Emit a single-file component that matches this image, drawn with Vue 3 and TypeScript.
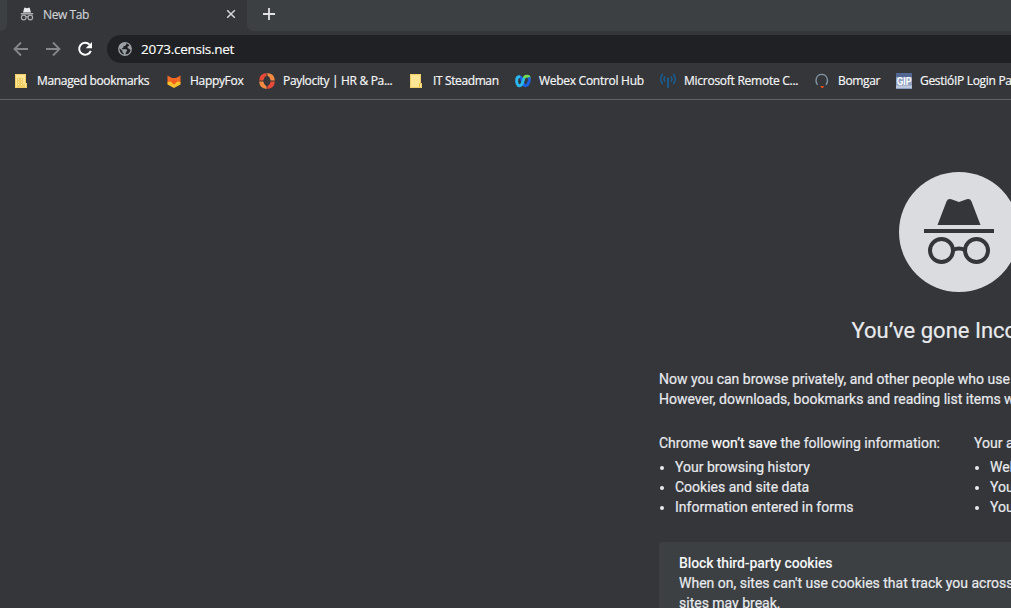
<script setup lang="ts">
interface Bookmark {
  icon: string
  label: string
  width: number
  spacing: number
}

const bookmarks: Bookmark[] = [
  { icon: 'managed', label: 'Managed bookmarks', width: 153, spacing: -0.34 },
  { icon: 'fox', label: 'HappyFox', width: 93, spacing: -0.32 },
  { icon: 'paylocity', label: 'Paylocity | HR & Pa...', width: 150, spacing: -0.33 },
  { icon: 'folder', label: 'IT Steadman', width: 106, spacing: -0.38 },
  { icon: 'webex', label: 'Webex Control Hub', width: 145, spacing: -0.28 },
  { icon: 'antenna', label: 'Microsoft Remote C...', width: 154, spacing: -0.26 },
  { icon: 'bomgar', label: 'Bomgar', width: 82, spacing: -0.33 },
  { icon: 'gip', label: 'GestióIP Login Page', width: 150, spacing: -0.3 },
]

const notSaved: string[] = ['Your browsing history', 'Cookies and site data', 'Information entered in forms']
const visibleTo: string[] = ['Websites you visit', 'Your employer or school', 'Your internet service provider']
</script>

<template>
  <div class="browser">
    <div class="tabstrip">
      <div class="edge"></div>
      <div class="tab">
        <svg class="tab-icon" width="14" height="14" viewBox="0 0 14 14">
          <path d="M3 5.600 4.200 1.200Q4.500.4 5.300.7L7 1.200 8.700.7q.8-.3 1.100.5L11 5.600z" fill="#e8eaed" />
          <path d="M.8 6.200h12.400v1.200H.8z" fill="#c9cbce" />
          <g fill="none" stroke="#a9acb0" stroke-width="1.200">
            <circle cx="3.700" cy="10.500" r="2.300" />
            <circle cx="10.300" cy="10.500" r="2.300" />
            <path d="M5.800 10q1.200-.7 2.400 0" />
          </g>
        </svg>
        <span class="tab-title">New Tab</span>
        <svg class="close" width="10" height="10" viewBox="0 0 10 10">
          <path d="m1.200 1.200 7.600 7.600m0-7.600L1.200 8.800" stroke="#d5d7da" stroke-width="1.500" />
        </svg>
      </div>
      <div class="rest">
        <svg width="12" height="12" viewBox="0 0 12 12">
          <path d="M6 0v12M0 6h12" stroke="#dfe1e5" stroke-width="1.800" />
        </svg>
      </div>
    </div>

    <div class="toolbar">
      <svg class="nav" width="16" height="16" viewBox="0 0 16 16">
        <path d="M15 8H2.200M8 1.500 1.500 8 8 14.500" fill="none" stroke="#85878a" stroke-width="1.800" />
      </svg>
      <svg class="nav" width="16" height="16" viewBox="0 0 16 16">
        <path d="M1 8h12.800M8 1.500 14.500 8 8 14.500" fill="none" stroke="#85878a" stroke-width="1.800" />
      </svg>
      <svg class="nav" width="16" height="16" viewBox="0 0 16 16">
        <path d="M12.600 3.700A6 6 0 1 0 13.800 9.800" fill="none" stroke="#fff" stroke-width="2" />
        <path d="M15 1v6.300H8.700z" fill="#fff" />
      </svg>
      <div class="omnibox">
        <svg width="14" height="14" viewBox="0 0 14 14">
          <circle cx="7" cy="7" r="6.900" fill="#9aa0a6" />
          <path d="M8.200 1.300v1.500L6.900 4.100H5.500v1.400l-1.400.7v1h4.300l.8 1.600-1.400 1.500-.2 2.200A5.600 5.600 0 0 0 12.600 8L11 6.800 9.600 6V4.800l1.800-1.300A5.600 5.600 0 0 0 8.200 1.300zM1.500 6.300l3 2.700v1.600l1.400 1v1A5.600 5.600 0 0 1 1.500 6.300z" fill="#202124" />
        </svg>
        <span class="url">2073.censis.net</span>
      </div>
    </div>

    <div class="bookmarks">
      <div v-for="b in bookmarks" :key="b.label" class="bookmark" :style="{ width: b.width + 'px' }">
        <svg width="16" height="16" viewBox="0 0 16 16">
          <g v-if="b.icon === 'managed'">
            <path d="M2 1h11v9h1v5H2z" fill="#ffe596" />
            <path d="M2.500 1.500h10v9h1v4h-11z" fill="none" stroke="#f3d067" />
            <path d="M4 5h6v9H4z" fill="#f2cf66" />
            <path d="M5 6h1v1H5zm3 0h1v1H8zM5 8.500h1v1H5zm3 0h1v1H8zM5 11h1v1H5zm3 0h1v1H8z" fill="#fff0bd" />
            <path d="M11 11v3.500" stroke="#e6bd45" />
          </g>
          <g v-else-if="b.icon === 'folder'">
            <path d="M1 1h11v9h1v5H1z" fill="#ffe596" />
            <path d="M1.500 1.500h10v9h1v4h-11z" fill="none" stroke="#f3d067" />
            <path d="M10.500 14v-3.500h1.500" fill="none" stroke="#e6bd45" />
          </g>
          <g v-else-if="b.icon === 'fox'">
            <path d="M1.500 2.500 6 5h4l4.500-2.500v7.500L8 14 1.500 10z" fill="#f06a25" />
            <path d="M1.500 9 5 8.500l3 3 3-3 3.500.5v2.500L8 15l-6.500-3.500z" fill="#fbc02d" />
            <path d="m4.500 8 3.500 3.500L11.500 8 8 6.500z" fill="#f45b20" />
          </g>
          <g v-else-if="b.icon === 'paylocity'">
            <path d="M7.600.1Q.6.6.1 7.500h4.200Q4.800 4 7.600 2.600z" fill="#e84a38" />
            <path d="M8.400.1q7 .5 7.500 7.400h-4.200Q11.200 4 8.400 2.600z" fill="#f28a42" />
            <path d="M7.600 15.900Q.6 15.400.1 8.500h4.200q.5 3.500 3.300 4.900z" fill="#f28a42" />
            <path d="M8.400 15.900q7-.5 7.500-7.400h-4.200q-.5 3.500-3.300 4.900z" fill="#e84a38" />
          </g>
          <g v-else-if="b.icon === 'webex'" fill="none" stroke-width="2.900" stroke-linecap="round">
            <path d="M8.500 6.500C9.200 3 13.700 1.700 14.200 5" stroke="#6fdc55" />
            <path d="M14.200 5.500C14.700 10 12 14 9.300 12.200S7.500 3.200 4.500 3.700" stroke="#1c62e0" />
            <path d="M4 3.700C.3 4.200 1.300 14 5 12.700 8 12 7.600 8.500 8.600 6" stroke="#2ab8ef" />
          </g>
          <g v-else-if="b.icon === 'antenna'" fill="none" stroke="#17629c" stroke-width="1.300">
            <path d="M5 3.500q-2 2.500 0 5M11 3.500q2 2.500 0 5M2.700 1q-4 5 0 10M13.300 1q4 5 0 10" />
            <path d="M8 5.500V15" stroke-width="1.600" />
            <circle cx="8" cy="5.500" r="1.100" fill="#17629c" stroke="none" />
          </g>
          <g v-else-if="b.icon === 'bomgar'">
            <path d="M3.500 12Q1 8.500 2.500 5a5.600 5.600 0 0 1 10.500 0q1.500 3.500-1 7" fill="none" stroke="#8196a5" stroke-width="1.200" />
            <path d="M6.500 13H10l-1 2H7.500z" fill="#ed4d1c" />
          </g>
          <g v-else>
            <path d="M0 0h16v16H0z" fill="#8e9fc2" />
            <path d="M0 0h16v4H0z" fill="#526794" />
            <path d="M0 12.500h16V15H0z" fill="#bcc7db" />
            <text x="8" y="12" text-anchor="middle" textLength="14.500" lengthAdjust="spacingAndGlyphs" class="gip">GIP</text>
          </g>
        </svg>
        <span class="label" :style="{ letterSpacing: b.spacing + 'px' }">{{ b.label }}</span>
      </div>
    </div>

    <main class="page">
      <div class="content">
        <svg class="logo" width="120" height="120" viewBox="0 0 120 120">
          <circle cx="60" cy="60" r="60" fill="#dadce0" />
          <g fill="#35363a">
            <path d="m38.500 53 9-23.600q1.300-3.200 4.800-2.200L60 30l7.700-2.800q3.500-1 4.800 2.200L81.500 53z" />
            <path d="M25 57h70v4H25z" />
          </g>
          <g fill="none" stroke="#35363a" stroke-width="4">
            <circle cx="42.500" cy="78.500" r="11.500" />
            <circle cx="77.500" cy="78.500" r="11.500" />
            <path d="M54 78q6-3.200 12 0" />
          </g>
        </svg>
        <h1>You’ve gone Incognito</h1>
        <p class="intro">
          Now you can browse privately, and other people who use this device won’t see your activity.<br />
          However, downloads, bookmarks and reading list items will be saved.
        </p>
        <div class="columns">
          <section class="first">
            <p>Chrome <em>won’t save</em> the following information:</p>
            <ul>
              <li v-for="item in notSaved" :key="item">{{ item }}</li>
            </ul>
          </section>
          <section>
            <p>Your activity <em>might still be visible</em> to:</p>
            <ul>
              <li v-for="item in visibleTo" :key="item">{{ item }}</li>
            </ul>
          </section>
        </div>
        <div class="cookies">
          <strong>Block third-party cookies</strong>
          <p>When on, sites can't use cookies that track you across the web. Features on some<br />sites may break.</p>
        </div>
      </div>
    </main>
  </div>
</template>

<style>
body {
  margin: 0;
  overflow: hidden;
  background: #35363a;
}
</style>

<style scoped>
.browser {
  width: 1011px;
  height: 608px;
  overflow: hidden;
  display: flex;
  flex-direction: column;
  background: #35363a;
  color: #e8eaed;
  font-family: "Open Sans", "Noto Sans", sans-serif;
  font-size: 12px;
  white-space: nowrap;
}
.tabstrip {
  display: flex;
  flex: 0 0 31px;
}
.edge {
  width: 7px;
  background: #3c4043;
  border-bottom-right-radius: 7px;
}
.tab {
  width: 240px;
  box-sizing: border-box;
  padding: 0 11px 3px 13px;
  display: flex;
  align-items: center;
}
.tab-title {
  margin-left: 9px;
  color: #d0d2d5;
  letter-spacing: -0.4px;
  -webkit-text-stroke: 0.15px;
}
.close {
  margin-left: auto;
}
.rest {
  flex: 1;
  display: flex;
  align-items: center;
  padding: 0 0 3px 16px;
  background: #3c4043;
  border-bottom-left-radius: 7px;
}
.toolbar {
  flex: 0 0 36px;
  display: flex;
  align-items: center;
  padding-left: 13px;
  gap: 16px;
}
.omnibox {
  flex: 1;
  display: flex;
  align-items: center;
  gap: 9px;
  height: 28px;
  margin-left: -2px;
  padding-left: 11px;
  background: #202124;
  border-radius: 14px 0 0 14px;
}
.url {
  color: #fff;
  font-size: 13.5px;
  letter-spacing: -0.28px;
  -webkit-text-stroke: 0.15px;
}
.bookmarks {
  flex: 0 0 33px;
  display: flex;
  align-items: center;
  padding: 0 0 5px 13px;
  box-sizing: border-box;
  border-bottom: 1px solid #5f6165;
}
.bookmark {
  flex: none;
  display: flex;
  align-items: center;
  gap: 8px;
}
.bookmark svg {
  flex: none;
}
.label {
  color: #f4f5f6;
  -webkit-text-stroke: 0.2px;
}
.gip {
  font: bold 10px "Liberation Sans", sans-serif;
  fill: #fff;
}
.page {
  flex: 1;
  overflow: hidden;
  padding: 72px 0 0 659px;
  font-family: Roboto, sans-serif;
  font-size: 14px;
  line-height: 20px;
  -webkit-text-stroke: 0.2px;
}
.content {
  width: 600px;
  display: flex;
  flex-direction: column;
}
.logo {
  align-self: center;
}
h1 {
  margin: 25px 0 0;
  text-align: center;
  font-size: 22px;
  line-height: 28px;
  font-weight: 400;
}
p {
  margin: 0;
}
.intro {
  margin-top: 24px;
}
.columns {
  display: flex;
  gap: 34px;
  margin-top: 24px;
}
.first {
  width: 281px;
}
em {
  font-style: normal;
  color: #fff;
}
ul {
  margin: 4px 0 0;
  padding-left: 16px;
}
.cookies {
  margin-top: 25px;
  padding: 11px 20px 20px;
  border-radius: 4px;
  background: #3c4043;
}
strong {
  font-weight: 500;
  letter-spacing: -0.12px;
  color: #f5f6f7;
  -webkit-text-stroke: 0;
}
</style>
